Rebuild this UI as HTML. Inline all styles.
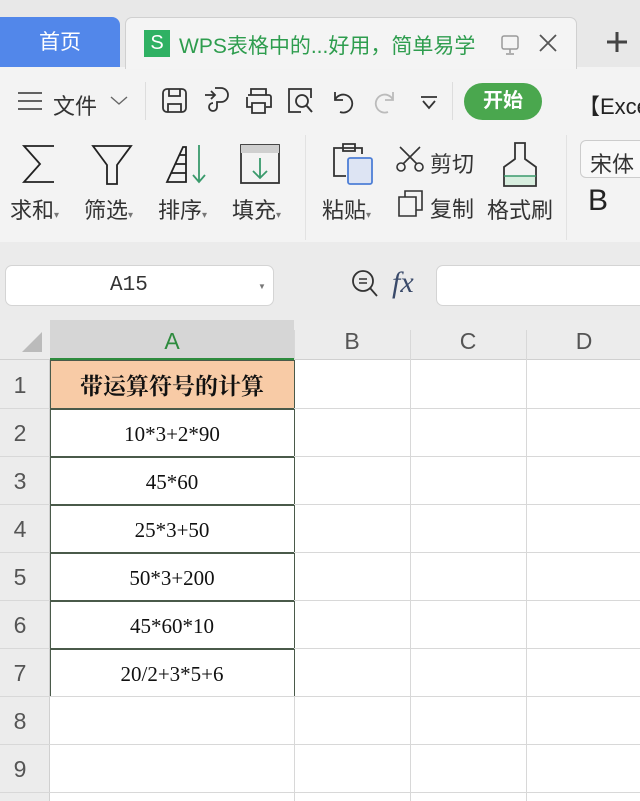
<!DOCTYPE html><html><head><meta charset="utf-8"><style>
*{margin:0;padding:0;box-sizing:border-box}
body{width:640px;height:801px;overflow:hidden;background:#f3f3f3;font-family:"Liberation Sans","Noto Sans CJK SC",sans-serif;position:relative;color:#333}
.a{position:absolute}
.t{font-size:21px;color:#333;white-space:nowrap}
svg{position:absolute;overflow:visible}
</style></head><body>
<div class="a" style="left:0;top:0;width:640px;height:67px;background:#e8e8e8"></div>
<div class="a" style="left:0;top:17px;width:120px;height:50px;background:#5287ea;border-radius:0 8px 0 0;color:#fff;font-size:21px;line-height:52px;text-align:center">首页</div>
<div class="a" style="left:125px;top:17px;width:452px;height:52px;background:#f4f4f4;border:1px solid #d0d0d0;border-bottom:none;border-radius:7px 7px 0 0"></div>
<div class="a" style="left:144px;top:30px;width:26px;height:27px;background:#2fb163;color:#fff;font-size:20px;line-height:27px;text-align:center">S</div>
<div class="a t" style="left:179px;top:30px;color:#2e9d4e">WPS表格中的...好用，简单易学</div>
<svg style="left:500px;top:34px" width="22" height="22"><rect x="2" y="2" width="16" height="13" rx="2" fill="none" stroke="#999" stroke-width="1.5"/><path d="M10 15v4M6 20h8" stroke="#999" stroke-width="1.5"/></svg>
<svg style="left:538px;top:33px" width="20" height="20"><path d="M2 2L18 18M18 2L2 18" stroke="#555" stroke-width="1.8"/></svg>
<svg style="left:606px;top:31px" width="22" height="22"><path d="M11 1v20M1 11h20" stroke="#444" stroke-width="3"/></svg>
<svg style="left:18px;top:91px" width="26" height="20"><path d="M0 2h24M0 10h24M0 18h24" stroke="#333" stroke-width="1.6"/></svg>
<div class="a t" style="left:53px;top:89px;font-size:22px">文件</div>
<svg style="left:110px;top:96px" width="18" height="10"><path d="M1 1l8 7l8-7" fill="none" stroke="#666" stroke-width="1.4"/></svg>
<div class="a" style="left:145px;top:82px;width:1px;height:38px;background:#ddd"></div>
<svg style="left:162px;top:88px" width="26" height="26"><rect x="1" y="1" width="23" height="23" rx="4" fill="none" stroke="#333" stroke-width="1.8"/><path d="M7 1v7h11V1M6 24v-8h13v8" fill="none" stroke="#333" stroke-width="1.8"/></svg>
<svg style="left:203px;top:86px" width="28" height="30"><path d="M2 9h10M8 5l4 4l-4 4M12 2h6a7 7 0 0 1 0 14h-4v5a4 4 0 1 1-4-4" fill="none" stroke="#333" stroke-width="1.8"/></svg>
<svg style="left:245px;top:88px" width="28" height="26"><path d="M6 7V1h15v6M3 7h21a2 2 0 0 1 2 2v10h-5M7 19H2V9M7 15h13v10H7z" fill="none" stroke="#333" stroke-width="1.8"/></svg>
<svg style="left:287px;top:88px" width="28" height="26"><path d="M14 24H2V1h22v9" fill="none" stroke="#333" stroke-width="1.8"/><circle cx="15" cy="13" r="6" fill="none" stroke="#333" stroke-width="1.8"/><path d="M19 17l6 7" stroke="#333" stroke-width="2"/></svg>
<svg style="left:332px;top:90px" width="24" height="24"><path d="M3 2v8h8M3 10a9 9 0 1 1 5 12" fill="none" stroke="#333" stroke-width="1.8"/></svg>
<svg style="left:372px;top:90px" width="24" height="24"><path d="M21 2v8h-8M21 10a9 9 0 1 0-5 12" fill="none" stroke="#bbb" stroke-width="1.8"/></svg>
<svg style="left:420px;top:95px" width="18" height="16"><path d="M1 2h16M3 6l6 7l6-7" fill="none" stroke="#333" stroke-width="1.8"/></svg>
<div class="a" style="left:452px;top:82px;width:1px;height:38px;background:#ddd"></div>
<div class="a" style="left:464px;top:83px;width:78px;height:37px;background:#4aa74e;border-radius:19px;color:#fff;font-weight:bold;font-size:20px;line-height:37px;text-align:center">开始</div>
<div class="a t" style="left:578px;top:89px;color:#222;font-size:22px">【Excel</div>
<div class="a" style="left:305px;top:135px;width:1px;height:105px;background:#e2e2e2"></div>
<div class="a" style="left:566px;top:135px;width:1px;height:105px;background:#e2e2e2"></div>
<svg style="left:22px;top:145px" width="34" height="38"><path d="M32 1H2l16 18L2 37h30" fill="none" stroke="#222" stroke-width="1.8"/></svg>
<svg style="left:92px;top:145px" width="40" height="40"><path d="M1 1h38L25 20v19h-10V20z" fill="none" stroke="#222" stroke-width="1.8"/></svg>
<svg style="left:165px;top:143px" width="45" height="42"><path d="M2 39L18 4h3v35zM6 30h15M10 21h11M14 12h7" fill="none" stroke="#222" stroke-width="1.8"/><path d="M34 2v37M28 32l6 7l6-7" fill="none" stroke="#3a9a6c" stroke-width="1.8"/></svg>
<svg style="left:240px;top:144px" width="40" height="40"><rect x="1" y="1" width="38" height="38" fill="none" stroke="#333" stroke-width="1.8"/><rect x="1" y="1" width="38" height="8" fill="#cfcfcf"/><path d="M20 14v20M13 27l7 7l7-7" fill="none" stroke="#3a9a6c" stroke-width="1.8"/></svg>
<div class="a t" style="left:10px;top:193px;font-size:22px">求和<span style="font-size:10px;color:#777">▾</span></div>
<div class="a t" style="left:84px;top:193px;font-size:22px">筛选<span style="font-size:10px;color:#777">▾</span></div>
<div class="a t" style="left:158px;top:193px;font-size:22px">排序<span style="font-size:10px;color:#777">▾</span></div>
<div class="a t" style="left:232px;top:193px;font-size:22px">填充<span style="font-size:10px;color:#777">▾</span></div>
<svg style="left:332px;top:142px" width="42" height="44"><path d="M14 34H2V6h28v6M11 2h12v7H11z" fill="none" stroke="#333" stroke-width="1.8"/><rect x="16" y="16" width="24" height="26" rx="2" fill="#dde4f3" stroke="#4e7fd6" stroke-width="1.8"/></svg>
<div class="a t" style="left:322px;top:193px;font-size:22px">粘贴<span style="font-size:10px;color:#777">▾</span></div>
<svg style="left:396px;top:145px" width="28" height="28"><path d="M4 2l18 18M24 2L6 20" stroke="#333" stroke-width="1.6"/><circle cx="5" cy="22" r="4" fill="#f3f3f3" stroke="#333" stroke-width="1.6"/><circle cx="23" cy="22" r="4" fill="#f3f3f3" stroke="#333" stroke-width="1.6"/></svg>
<div class="a t" style="left:430px;top:147px;font-size:22px">剪切</div>
<svg style="left:398px;top:190px" width="26" height="28"><path d="M7 7V1h17v19h-6M1 7h17v19H1z" fill="none" stroke="#333" stroke-width="1.6"/></svg>
<div class="a t" style="left:430px;top:192px;font-size:22px">复制</div>
<svg style="left:502px;top:142px" width="36" height="46"><path d="M13 1h10v16l11 8v19H2V25l11-8z" fill="none" stroke="#333" stroke-width="1.8"/><rect x="3" y="34" width="30" height="9" fill="#d8eedf"/><path d="M2 34h32" stroke="#3a9a6c" stroke-width="1.5"/></svg>
<div class="a t" style="left:487px;top:193px;font-size:22px">格式刷</div>
<div class="a" style="left:580px;top:140px;width:70px;height:38px;border:1px solid #ccc;border-radius:6px;background:#f8f8f8"></div>
<div class="a t" style="left:590px;top:147px;font-size:22px">宋体</div>
<div class="a" style="left:588px;top:184px;font-size:30px;color:#222">B</div>
<div class="a" style="left:0;top:242px;width:640px;height:78px;background:#ebebeb"></div>
<div class="a" style="left:5px;top:265px;width:269px;height:41px;background:#fff;border:1px solid #d4d4d4;border-radius:7px"></div>
<div class="a" style="left:110px;top:274px;font-family:'Liberation Mono',monospace;font-size:21px;color:#333">A15</div>
<div class="a" style="left:258px;top:282px;font-size:8px;color:#777">▼</div>
<svg style="left:351px;top:269px" width="30" height="30"><circle cx="12" cy="12" r="10" fill="none" stroke="#333" stroke-width="1.8"/><path d="M8 10h8M8 14h8" stroke="#333" stroke-width="1.6"/><path d="M19 19l7 8" stroke="#333" stroke-width="1.8"/></svg>
<div class="a" style="left:392px;top:266px;font-family:'Liberation Serif',serif;font-style:italic;font-size:30px;color:#3a4a6a">fx</div>
<div class="a" style="left:436px;top:265px;width:220px;height:41px;background:#fff;border:1px solid #d4d4d4;border-radius:7px"></div>
<div class="a" style="left:0;top:320px;width:640px;height:481px;background:#fff"></div>
<div class="a" style="left:0;top:320px;width:640px;height:40px;background:#ececec;border-bottom:1px solid #d0d0d0"></div>
<div class="a" style="left:50px;top:320px;width:244px;height:40px;background:#d6d6d6;border-bottom:2px solid #2e8b3e;color:#2e8b3e;font-size:23px;text-align:center;line-height:42px">A</div>
<svg style="left:22px;top:332px" width="20" height="20"><path d="M20 0V20H0z" fill="#bbb"/></svg>
<div class="a" style="left:294px;top:320px;width:116px;line-height:42px;text-align:center;font-size:23px;color:#555">B</div>
<div class="a" style="left:410px;top:320px;width:116px;line-height:42px;text-align:center;font-size:23px;color:#555">C</div>
<div class="a" style="left:526px;top:320px;width:116px;line-height:42px;text-align:center;font-size:23px;color:#555">D</div>
<div class="a" style="left:0;top:360px;width:50px;height:441px;background:#ececec;border-right:1px solid #d0d0d0"></div>
<div class="a" style="left:410px;top:330px;width:1px;height:471px;background:#d8d8d8"></div>
<div class="a" style="left:526px;top:330px;width:1px;height:471px;background:#d8d8d8"></div>
<div class="a" style="left:294px;top:330px;width:1px;height:471px;background:#d8d8d8"></div>
<div class="a" style="left:50px;top:360px;width:244px;height:48px;background:#f8cba6;font-family:'Noto Serif CJK SC',serif;font-weight:bold;font-size:23px;line-height:50px;text-align:center;color:#111">带运算符号的计算</div>
<div class="a" style="left:50px;top:360px;width:245px;height:337px;border:1.5px solid #4a5a4a"></div>
<div style="font-family:'Liberation Serif',serif;font-size:21px;color:#111">
<div class="a" style="left:50px;top:410px;width:244px;line-height:48px;text-align:center">10*3+2*90</div>
<div class="a" style="left:50px;top:458px;width:244px;line-height:48px;text-align:center">45*60</div>
<div class="a" style="left:50px;top:506px;width:244px;line-height:48px;text-align:center">25*3+50</div>
<div class="a" style="left:50px;top:554px;width:244px;line-height:48px;text-align:center">50*3+200</div>
<div class="a" style="left:50px;top:602px;width:244px;line-height:48px;text-align:center">45*60*10</div>
<div class="a" style="left:50px;top:650px;width:244px;line-height:48px;text-align:center">20/2+3*5+6</div>
</div>
<div style="font-size:23px;color:#555">
<div class="a" style="left:0;top:361px;width:40px;line-height:48px;text-align:center">1</div>
<div class="a" style="left:0;top:409px;width:40px;line-height:48px;text-align:center">2</div>
<div class="a" style="left:0;top:457px;width:40px;line-height:48px;text-align:center">3</div>
<div class="a" style="left:0;top:505px;width:40px;line-height:48px;text-align:center">4</div>
<div class="a" style="left:0;top:553px;width:40px;line-height:48px;text-align:center">5</div>
<div class="a" style="left:0;top:601px;width:40px;line-height:48px;text-align:center">6</div>
<div class="a" style="left:0;top:649px;width:40px;line-height:48px;text-align:center">7</div>
<div class="a" style="left:0;top:697px;width:40px;line-height:48px;text-align:center">8</div>
<div class="a" style="left:0;top:745px;width:40px;line-height:48px;text-align:center">9</div>
</div>
<div class="a" style="left:0;top:408px;width:640px;height:1px;background:#d8d8d8"></div>
<div class="a" style="left:0;top:456px;width:640px;height:1px;background:#d8d8d8"></div>
<div class="a" style="left:0;top:504px;width:640px;height:1px;background:#d8d8d8"></div>
<div class="a" style="left:0;top:552px;width:640px;height:1px;background:#d8d8d8"></div>
<div class="a" style="left:0;top:600px;width:640px;height:1px;background:#d8d8d8"></div>
<div class="a" style="left:0;top:648px;width:640px;height:1px;background:#d8d8d8"></div>
<div class="a" style="left:0;top:696px;width:640px;height:1px;background:#d8d8d8"></div>
<div class="a" style="left:0;top:744px;width:640px;height:1px;background:#d8d8d8"></div>
<div class="a" style="left:0;top:792px;width:640px;height:1px;background:#d8d8d8"></div>
<div class="a" style="left:50px;top:408px;width:244px;height:1.5px;background:#4a5a4a"></div>
<div class="a" style="left:50px;top:456px;width:244px;height:1.5px;background:#4a5a4a"></div>
<div class="a" style="left:50px;top:504px;width:244px;height:1.5px;background:#4a5a4a"></div>
<div class="a" style="left:50px;top:552px;width:244px;height:1.5px;background:#4a5a4a"></div>
<div class="a" style="left:50px;top:600px;width:244px;height:1.5px;background:#4a5a4a"></div>
<div class="a" style="left:50px;top:648px;width:244px;height:1.5px;background:#4a5a4a"></div>
</body></html>
